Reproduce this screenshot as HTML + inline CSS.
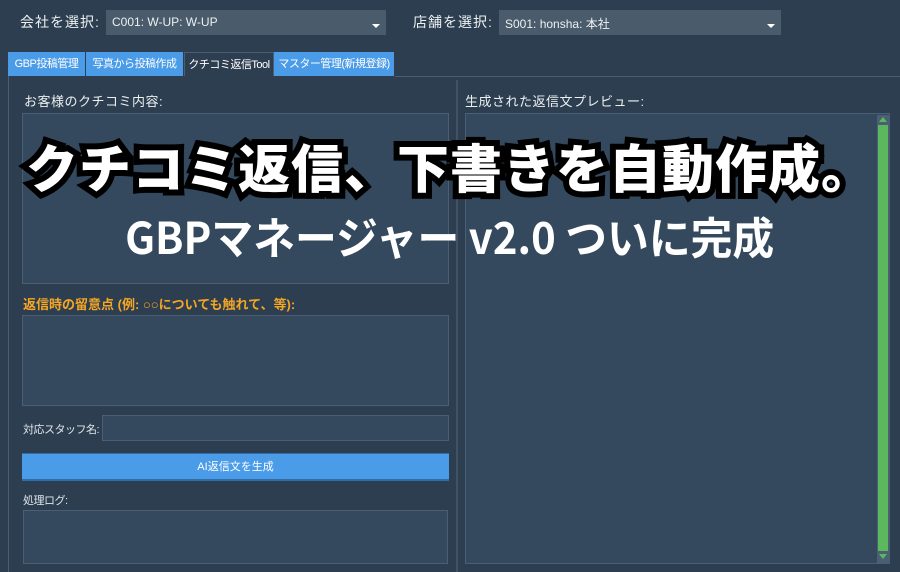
<!DOCTYPE html>
<html><head><meta charset="utf-8"><style>
*{margin:0;padding:0;box-sizing:border-box}
body{width:900px;height:572px;background:#2c3e50;font-family:"Liberation Sans","Noto Sans CJK JP",sans-serif;color:#ecf0f1;position:relative;overflow:hidden}
.a{position:absolute}
.lbl{font-size:14px;color:#ecf0f1;letter-spacing:1px}
.combo{background:#4a5b6c;font-size:12px;color:#ecf0f1;padding:5px 6px;height:25px}
.combo:after{content:"";position:absolute;right:6px;bottom:7px;border:4px solid transparent;border-top:4px solid #fff;border-bottom:0}
.tab{top:52px;height:24px;background:#4a9be8;color:#fff;font-size:11px;line-height:24px;text-align:center;border-right:1px solid #2c3e50;white-space:nowrap;overflow:hidden;letter-spacing:-0.5px}
.ta{background:#34495e;border:1px solid #4a5f73}
.sm{font-size:11px;color:#dfe6ea;white-space:nowrap;letter-spacing:-0.5px}
.big{left:0;width:900px;top:128px;text-align:center;font-size:52px;font-weight:900;color:#fff;-webkit-text-stroke:12px #000;paint-order:stroke fill;letter-spacing:1px;font-family:"Noto Sans CJK JP",sans-serif;white-space:nowrap}
.sub{left:0;width:900px;top:203px;text-align:center;font-size:44px;font-weight:700;color:#fff;font-family:"Noto Sans CJK JP",sans-serif;white-space:nowrap}
</style></head><body>
<div class="a lbl" style="left:20px;top:12px">会社を選択:</div>
<div class="a combo" style="left:106px;top:10px;width:280px">C001: W-UP: W-UP</div>
<div class="a lbl" style="left:413px;top:12px">店舗を選択:</div>
<div class="a combo" style="left:499px;top:10px;width:282px">S001: honsha: 本社</div>
<div class="a tab" style="left:8px;width:78px">GBP投稿管理</div>
<div class="a tab" style="left:86px;width:98px">写真から投稿作成</div>
<div class="a tab" style="left:184px;width:90px;background:#2c3e50;border:1px solid #4a5f73;border-bottom:0">クチコミ返信Tool</div>
<div class="a tab" style="left:274px;width:121px">マスター管理(新規登録)</div>
<div class="a" style="left:395px;top:76px;width:505px;height:1px;background:#4a5f73"></div>
<div class="a" style="left:8px;top:76px;width:1px;height:496px;background:#4a5f73"></div>
<div class="a" style="left:456px;top:80px;width:2px;height:492px;background:#3f5266"></div>
<div class="a lbl" style="left:24px;top:91px;font-size:13px;letter-spacing:0.5px">お客様のクチコミ内容:</div>
<div class="a ta" style="left:22px;top:113px;width:427px;height:171px"></div>
<div class="a" style="left:23px;top:294px;font-size:13px;color:#f5a623;font-weight:bold">返信時の留意点 (例: ○○についても触れて、等):</div>
<div class="a ta" style="left:22px;top:315px;width:427px;height:91px"></div>
<div class="a sm" style="left:23px;top:421px">対応スタッフ名:</div>
<div class="a ta" style="left:102px;top:415px;width:347px;height:26px"></div>
<div class="a" style="left:22px;top:453px;width:427px;height:28px;background:#4a9be8;border-bottom:2px solid #2f6ea8;border-top:1px solid #2f6ea8;color:#fff;font-size:11px;text-align:center;line-height:26px">AI返信文を生成</div>
<div class="a sm" style="left:23px;top:492px">処理ログ:</div>
<div class="a ta" style="left:23px;top:510px;width:425px;height:54px"></div>
<div class="a lbl" style="left:465px;top:91px;font-size:13px;letter-spacing:0.5px">生成された返信文プレビュー:</div>
<div class="a ta" style="left:465px;top:113px;width:425px;height:451px"></div>
<div class="a" style="left:877px;top:115px;width:12px;height:448px;background:#4a5f73"></div>
<div class="a" style="left:878px;top:125px;width:10px;height:426px;background:#5cb85c"></div>
<div class="a" style="left:879px;top:117px;border:4px solid transparent;border-bottom:5px solid #5cb85c;border-top:0"></div>
<div class="a" style="left:879px;top:554px;border:4px solid transparent;border-top:5px solid #5cb85c;border-bottom:0"></div>
<div class="a big">クチコミ返信、下書きを自動作成。</div>
<div class="a sub"><span style="display:inline-block;transform:scaleX(0.95)">GBPマネージャー v2.0 ついに完成</span></div>
</body></html>
